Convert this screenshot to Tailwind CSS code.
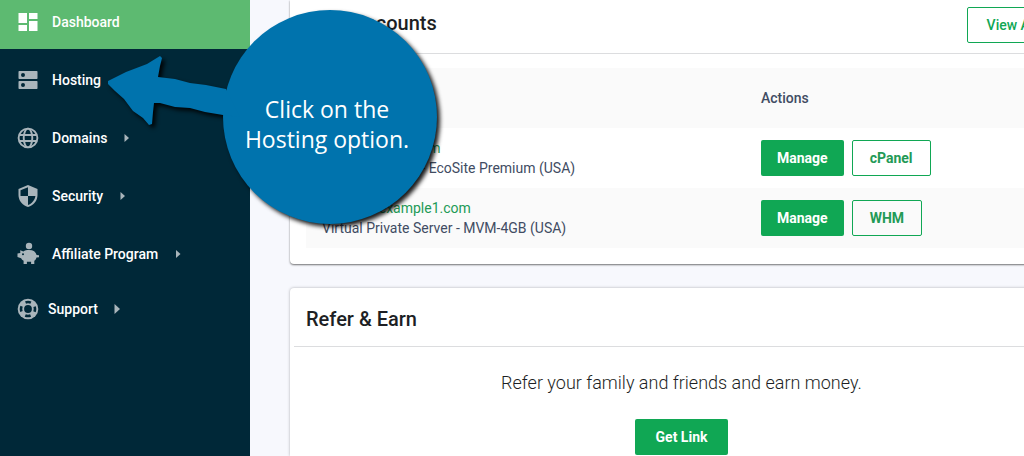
<!DOCTYPE html>
<html lang="en">
<head>
<meta charset="utf-8">
<meta name="viewport" content="width=device-width, initial-scale=1">
<title>Dashboard</title>
<script src="https://cdn.jsdelivr.net/npm/@tailwindcss/browser@4"></script>
</head>
<body class="relative flex min-h-screen overflow-hidden bg-[#f7f8fd] font-['Roboto',sans-serif] text-sm text-[#414c63]">
  <aside class="w-[250px] shrink-0 bg-[#002838]">
    <nav aria-label="Main" class="-mt-1.5 flex flex-col gap-0.5 font-medium text-white">
      <a href="#" class="mb-px flex h-[55px] items-center gap-3 bg-[#5dba71] px-4">
        <svg class="size-6" viewBox="0 0 24 24" fill="#fff" aria-hidden="true"><path d="M2.5 3h8.500v10h-8.500zM13 3h8.500v6h-8.500zM13 11h8.500v10h-8.500zM2.500 15h8.500v6h-8.500z"/></svg>
        <span>Dashboard</span>
      </a>
      <a href="#" class="flex h-14 items-center gap-3 px-4">
        <svg class="size-6" viewBox="0 0 24 24" fill="#a9b5bb" aria-hidden="true"><path fill-rule="evenodd" d="M3.200 3h17.600q.7 0 .7.7v6.600q0 .7-.7.7H3.200q-.7 0-.7-.7V3.700q0-.7.7-.7zM7 5a2 2 0 1 0 0 4 2 2 0 0 0 0-4zM3.200 13h17.600q.7 0 .7.7v6.600q0 .7-.7.7H3.200q-.7 0-.7-.7v-6.600q0-.7.7-.7zM7 15a2 2 0 1 0 0 4 2 2 0 0 0 0-4z"/></svg>
        <span>Hosting</span>
      </a>
      <a href="#" class="flex h-14 items-center gap-3 px-4">
        <svg class="size-6" viewBox="0 0 24 24" fill="none" stroke="#a9b5bb" stroke-width="1.900" aria-hidden="true"><circle cx="12" cy="12" r="9.400"/><ellipse cx="12" cy="12" rx="4.300" ry="9.400"/><path d="M3.200 9h17.600M3.200 15h17.600"/></svg>
        <span>Domains</span>
        <svg class="ml-1 h-2 w-3" viewBox="0 0 12 8" fill="#a9b5bb" aria-hidden="true"><path d="M1.500 0l4.500 4-4.500 4z"/></svg>
      </a>
      <a href="#" class="flex h-14 items-center gap-3 px-4">
        <svg class="size-6" viewBox="0 0 24 24" aria-hidden="true"><path fill="#a9b5bb" d="M12 1L2.500 5v6c0 5.600 4 10.700 9.500 12 5.500-1.300 9.500-6.400 9.500-12V5z"/><path fill="#002838" d="M12 3.200V12H4.500V6.300zM12 12h7.400c-.5 4.100-3.700 7.900-7.400 9z"/></svg>
        <span>Security</span>
        <svg class="ml-1 h-2 w-3" viewBox="0 0 12 8" fill="#a9b5bb" aria-hidden="true"><path d="M1.500 0l4.500 4-4.500 4z"/></svg>
      </a>
      <a href="#" class="flex h-14 items-center gap-3 px-4">
        <svg class="size-6" viewBox="0 0 24 24" fill="#a9b5bb" aria-hidden="true"><circle cx="13" cy="4" r="3.200"/><path fill-rule="evenodd" d="M4.200 8.200l3.200 1.300C8.800 8.400 10.700 8 13 8c4.400 0 6.900 1.900 7.600 5l2.400.3v1.900l-2.500.2c-.4 1.500-1.100 2.500-2.200 3.300V22h-3.200v-2.200h-4.200V22H7.600v-3.200c-1.200-.7-2-1.500-2.500-2.600L1.500 15v-3.400l2.800-.7zM7 11.200a1 1 0 1 0 0 2 1 1 0 0 0 0-2z"/></svg>
        <span>Affiliate Program</span>
        <svg class="ml-1 h-2 w-3" viewBox="0 0 12 8" fill="#a9b5bb" aria-hidden="true"><path d="M2 0l4.500 4L2 8z"/></svg>
      </a>
      <a href="#" class="flex h-[50px] items-center gap-2 px-4">
        <svg class="size-6" viewBox="0 0 24 24" aria-hidden="true"><circle cx="12" cy="12" r="10.300" fill="#a9b5bb"/><circle cx="12" cy="12" r="7" fill="none" stroke="#002838" stroke-width="2.600" stroke-dasharray="5.500 5.500" stroke-dashoffset="2.750"/><circle cx="12" cy="12" r="3.900" fill="#002838"/></svg>
        <span>Support</span>
        <svg class="ml-1 h-2.5 w-3" viewBox="0 0 12 10" fill="#a9b5bb" aria-hidden="true"><path d="M4.500 0l5.500 5-5.500 5z"/></svg>
      </a>
    </nav>
  </aside>

  <!-- The content column runs on past the right edge of the window -->
  <main class="-mr-[49px] ml-10 flex min-w-0 flex-1 flex-col gap-6">
    <section class="rounded-b-[4px] bg-white pb-4 shadow-[0_1px_2px_rgba(0,0,0,0.55)]">
      <header class="flex h-[54px] items-center justify-between border-b border-[#dcdddf] px-4 pb-2">
        <h2 class="text-xl font-medium text-[#1d1f24]">Your Accounts</h2>
        <a href="#" class="mt-1 flex h-9 items-center rounded-[2px] border border-[#10a754] px-[19px] font-medium text-[#10a754]">View All</a>
      </header>
      <div class="px-4 pt-3.5">
        <table class="w-full table-fixed text-left">
          <thead>
            <tr class="h-15 bg-[#fafafa]">
              <th class="w-[439px] px-4 font-medium">Account</th>
              <th class="px-4 font-medium">Actions</th>
            </tr>
          </thead>
          <tbody>
            <tr class="h-15">
              <td class="px-4 leading-5"><a href="#" class="text-[#239a56]">www.example.com</a><p>Shared Hosting - EcoSite Premium (USA)</p></td>
              <td class="px-4"><div class="flex gap-2">
                <button class="h-9 rounded-[2px] bg-[#10a754] px-4 font-bold text-white">Manage</button>
                <button class="h-9 rounded-[2px] border border-[#10a754] px-[17px] font-bold text-[#239a56]">cPanel</button>
              </div></td>
            </tr>
            <tr class="h-15 bg-[#fafafa]">
              <td class="px-4 leading-5"><a href="#" class="text-[#239a56]">vserver1.example1.com</a><p>Virtual Private Server - MVM-4GB (USA)</p></td>
              <td class="px-4"><div class="flex gap-2">
                <button class="h-9 rounded-[2px] bg-[#10a754] px-4 font-bold text-white">Manage</button>
                <button class="h-9 rounded-[2px] border border-[#10a754] px-[17px] font-bold text-[#239a56]">WHM</button>
              </div></td>
            </tr>
          </tbody>
        </table>
      </div>
    </section>

    <section class="flex-1 rounded-t-[4px] bg-white shadow-[0_0_3px_rgba(0,0,0,0.3)]">
      <header class="mx-1 flex h-[59px] items-center border-b border-[#dcdddf] px-3 pt-1">
        <h2 class="text-xl font-medium text-[#1d1f24]">Refer &amp; Earn</h2>
      </header>
      <div class="flex flex-col items-center gap-[22px] pt-[22px]">
        <p class="text-lg font-light text-[#1d1f24]">Refer your family and friends and earn money.</p>
        <button class="h-9 rounded-[2px] bg-[#10a754] px-[21px] font-bold text-white">Get Link</button>
      </div>
    </section>
  </main>

  <!-- Callout bubble lying over the page -->
  <div class="absolute left-[100px] top-0 h-60 w-[350px]">
    <svg class="absolute inset-0 size-full drop-shadow-[3px_3px_2px_rgba(0,0,0,0.9)]" viewBox="100 0 350 240" fill="#0073ad" aria-hidden="true">
      <circle cx="330" cy="117" r="107"/>
      <path d="M108 81L126 72 147 64 160 56 162 58 160 66 158 77 175 79 190 83 206 85 226 89 240 117 223 115 205 112 190 108 175 107 160 103 154 103 153 112 152 124 149 125 143 118 133 111 124 99 115 91 108 84z"/>
    </svg>
    <p class="relative ml-[123px] w-[208px] pt-[94px] text-center font-['Open_Sans',sans-serif] text-[23px] leading-[30px] text-white">Click on the<br>Hosting option.</p>
  </div>
</body>
</html>
